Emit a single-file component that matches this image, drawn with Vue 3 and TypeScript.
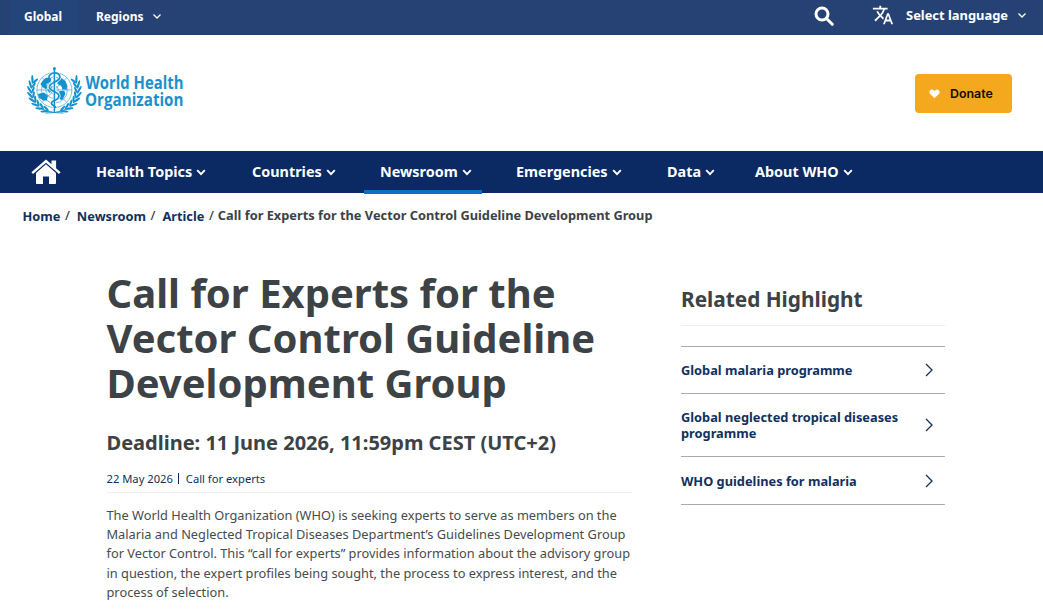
<script setup lang="ts">
import { ref } from 'vue'

interface NavItem {
  label: string
  active?: boolean
}

interface Leaf {
  x: number
  y: number
  rot: number
  len: number
}

const navItems: NavItem[] = [
  { label: 'Health Topics' },
  { label: 'Countries' },
  { label: 'Newsroom', active: true },
  { label: 'Emergencies' },
  { label: 'Data' },
  { label: 'About WHO' },
]

const crumbs = ['Home', 'Newsroom', 'Article']
const highlights = ref(['Global malaria programme', 'Global neglected tropical diseases programme', 'WHO guidelines for malaria'])

// laurel leaves of the left branch, mirrored for the right one
const leaves: Leaf[] = []
for (let i = 0; i < 8; i++) {
  const deg = 113 + i * 13.5
  const a = (deg * Math.PI) / 180
  for (const [r, tilt] of [[24.8, 60], [21.4, 112]]) {
    leaves.push({ x: 28 + r * Math.cos(a), y: 24 + r * Math.sin(a) * 0.93, rot: deg + tilt, len: r > 22 ? 4.4 : 3.3 })
  }
}
</script>

<template>
  <div class="page">
    <div class="topbar">
      <a class="top-global">Global</a>
      <a class="top-regions">Regions
        <svg class="chev-sm" viewBox="0 0 10 7"><path d="M1.5 1.5 5 5l3.5-3.5" /></svg>
      </a>
      <div class="top-right">
        <svg class="search" viewBox="0 0 20 20"><circle cx="8" cy="8" r="6" /><path d="m12.5 12.5 5.8 5.8" /></svg>
        <svg class="translate" viewBox="0 0 24 24">
          <path d="M12.87 15.07l-2.54-2.51.03-.03c1.74-1.94 2.98-4.17 3.71-6.53H17V4h-7V2H8v2H1v1.99h11.17C11.5 7.92 10.44 9.75 9 11.35 8.07 10.32 7.3 9.19 6.69 8h-2c.73 1.63 1.73 3.17 2.98 4.56l-5.09 5.02L4 19l5-5 3.11 3.11.76-2.04zM18.5 10h-2L12 22h2l1.12-3h4.75L21 22h2l-4.5-12zm-2.62 7l1.62-4.33L19.12 17h-3.24z" />
        </svg>
        <span class="lang">Select language</span>
        <svg class="chev-sm" viewBox="0 0 10 7"><path d="M1.5 1.5 5 5l3.5-3.5" /></svg>
      </div>
    </div>

    <header class="header">
      <svg class="logo" viewBox="0 0 160 52">
        <g transform="translate(-.6 0)">
          <g class="globe">
            <circle cx="28" cy="24" r="17.5" />
            <circle cx="28" cy="24" r="13" />
            <circle cx="28" cy="24" r="8.5" />
            <circle cx="28" cy="24" r="4" />
            <path d="M10.5 24h35M28 6.5v35M15.6 11.6l24.8 24.8M40.4 11.6 15.6 36.4" />
          </g>
          <g class="land">
            <path d="m16 15 3-3 4-1 2 2-1 3-4 2 1 4-2 1-3-2-2-3z" />
            <path d="m31 12 4 0 4 3 2 5-1 4-4-1-1-3-4-2 1-4z" />
            <path d="m11.5 28 6-1.5 4 3-1 5-4 0-4-3z" />
            <path d="m33 25 5 0 1 3-3 6-4-1z" />
            <path d="m22 20 3 0 1 4-3 3-2-3z" />
          </g>
          <g class="laurel">
            <ellipse v-for="(l, i) in leaves" :key="i" :cx="l.x" :cy="l.y" :rx="l.len" ry="1.1" :transform="`rotate(${l.rot} ${l.x} ${l.y})`" />
            <path class="stem" d="M37 47Q23 47 14 42" />
          </g>
          <g class="laurel" transform="translate(56 0) scale(-1 1)">
            <ellipse v-for="(l, i) in leaves" :key="i" :cx="l.x" :cy="l.y" :rx="l.len" ry="1.1" :transform="`rotate(${l.rot} ${l.x} ${l.y})`" />
            <path class="stem" d="M37 47Q23 47 14 42" />
          </g>
          <path class="halo" d="M28 4v42" />
          <path class="halo" d="M22.5 12c0-7 11-6.5 11-1 0 5-10.5 5-10.5 10s9.5 4 9.500 9-7.500 4-7.500 7 4.500 3 4.500 5" />
          <path class="snake" d="M22.5 12c0-7 11-6.5 11-1 0 5-10.5 5-10.5 10s9.5 4 9.500 9-7.500 4-7.500 7 4.500 3 4.500 5" />
          <path class="staff" d="M28 3v44" />
          <circle class="knob" cx="28" cy="2.6" r="1.5" />
        </g>
        <text class="logo-text" x="58.5" y="23" textLength="98" lengthAdjust="spacingAndGlyphs">World Health</text>
        <text class="logo-text" x="58" y="40" textLength="98.5" lengthAdjust="spacingAndGlyphs">Organization</text>
      </svg>
      <button class="donate">
        <svg viewBox="0 0 12 11"><path d="M6 10.3 1.2 5.6C-.9 3.2 1.6-.6 4.6 1L6 2.2 7.4 1c3-1.6 5.5 2.2 3.4 4.6z" /></svg>
        <span>Donate</span>
      </button>
    </header>

    <nav class="nav">
      <svg class="home" viewBox="0 0 30 26">
        <path d="M5 14 15 5.2 25 14v10.2q0 .8-.8.8H18v-7.5h-6V25H5.8q-.8 0-.8-.8z" />
        <path d="M15 .6 20.5 5.3V1.4h4.6v7.8l4.5 4-1.6 1.9L15 3.8 2 15.1.4 13.2z" />
      </svg>
      <div class="nav-items">
        <a v-for="item in navItems" :key="item.label" class="nav-item" :class="{ active: item.active }">
          <span>{{ item.label }}</span>
          <svg class="chev" viewBox="0 0 10 7"><path d="m1.2 1.2 3.8 4 3.8-4" /></svg>
        </a>
      </div>
    </nav>

    <div class="crumbs">
      <template v-for="c in crumbs" :key="c">
        <a>{{ c }}</a><i>/</i>
      </template>
      <span>Call for Experts for the Vector Control Guideline Development Group</span>
    </div>

    <main class="content">
      <article class="article">
        <h1>Call for Experts for the<br />Vector Control Guideline<br />Development Group</h1>
        <h2>Deadline: 11 June 2026, 11:59pm CEST (UTC+2)</h2>
        <div class="meta"><span>22 May 2026</span><b></b><span>Call for experts</span></div>
        <p>
          The World Health Organization (WHO) is seeking experts to serve as members on the<br />
          Malaria and Neglected Tropical Diseases Department’s Guidelines Development Group<br />
          for Vector Control. This “call for experts” provides information about the advisory group<br />
          in question, the expert profiles being sought, the process to express interest, and the<br />
          process of selection.
        </p>
      </article>

      <aside class="side">
        <h3>Related Highlight</h3>
        <ul>
          <li v-for="h in highlights" :key="h">
            <a>{{ h }}</a>
            <svg viewBox="0 0 8 14"><path d="m1 1 6 6-6 6" /></svg>
          </li>
        </ul>
      </aside>
    </main>
  </div>
</template>

<style>
body { background: #fff; overflow: hidden; }
</style>

<style scoped>
.page {
  width: 1043px; height: 612px; overflow: hidden; background: #fff; color: #3c4245;
  font-family: "Noto Sans", sans-serif; box-sizing: border-box;
}
.page * { box-sizing: border-box; }
svg { display: block; flex: none; }

.topbar { display: flex; height: 35px; background: #264274; color: #fff; font-size: 12px; font-weight: 700; line-height: 33px; }
.top-global { width: 68px; margin-left: 10px; padding-left: 14px; background: #23457a; }
.top-regions { display: flex; align-items: center; gap: 8px; margin-left: 18px; height: 33px; }
.chev-sm { width: 10px; height: 7px; fill: none; stroke: #fff; stroke-width: 1.3; }
.top-right { display: flex; align-items: center; height: 31px; margin-left: auto; padding-right: 16px; font-size: 12.9px; }
.search { width: 20px; height: 20px; margin-right: 38px; fill: none; stroke: #fff; stroke-width: 3; stroke-linecap: round; }
.translate { width: 22px; height: 22px; margin: -2px 12px 0 0; fill: #fff; }
.lang { margin-right: 9px; }

.header { display: flex; justify-content: space-between; height: 116px; padding: 31px 31px 0 27px; }
.logo { width: 160px; height: 52px; overflow: visible; }
.globe { fill: none; stroke: #3ba5d8; stroke-width: 0.7; }
.land, .laurel { fill: #1492cf; }
.stem { fill: none; stroke: #1492cf; stroke-width: 1; }
.halo { fill: none; stroke: #fff; stroke-width: 3.2; }
.snake { fill: none; stroke: #1492cf; stroke-width: 1.8; }
.staff { stroke: #1492cf; stroke-width: 1.6; }
.knob { fill: #1492cf; }
.logo-text { fill: #1b90cb; font: 700 18.5px "Open Sans", sans-serif; }
.donate {
  display: flex; align-items: center; gap: 10px; width: 97px; height: 39px; margin-top: 8px; padding: 0 0 0 14px;
  border: 0; border-radius: 4px; background: #f4a81d; color: #1a0a04; font: 600 12.4px Inter, sans-serif;
}
.donate svg { width: 11px; height: 10px; fill: #fff; }

.nav { display: flex; height: 42px; background: #0b2a63; color: #fff; }
.home { width: 30px; height: 26px; margin: 8px 19px 0 31px; fill: #fff; }
.nav-items { display: grid; grid-template-columns: 156px 128px 136px 151px 88px 130px; justify-items: start; }
.nav-item { display: flex; align-items: center; gap: 4px; height: 43px; padding: 2px 10px 0 16px; font-size: 14.4px; font-weight: 700; border-bottom: 4px solid transparent; }
.nav-item.active { border-bottom-color: #0d70c8; }
.chev { width: 10px; height: 7px; margin-top: 2px; fill: none; stroke: #fff; stroke-width: 1.9; }

.crumbs { display: flex; height: 45px; padding: 12px 0 0 22.5px; font-size: 12.8px; font-weight: 700; line-height: 20px; white-space: nowrap; }
.crumbs a { padding-top: 1px; color: #12305e; }
.crumbs i { margin: 0 7px 0 4.5px; font-style: normal; font-weight: 500; }
.crumbs i:last-of-type { margin-right: 4px; }

.content { display: flex; padding-left: 106.5px; }
.article { width: 525px; margin-right: 49.5px; white-space: nowrap; }
h1 { margin: 32px 0 0; font-size: 40px; line-height: 45px; font-weight: 700; }
h2 { margin: 24px 0 0; font-size: 20px; line-height: 28px; font-weight: 700; }
.meta { display: flex; align-items: center; height: 36px; padding-top: 7px; border-bottom: 1px solid #eee; font-size: 11.2px; color: #12305e; }
.meta b { width: 1px; height: 11px; margin: 0 7px 0 5px; background: #12305e; }
.article p { margin: 13px 0 0; font-size: 12.8px; line-height: 19.2px; color: #464b4e; }

.side { width: 264px; }
h3 { height: 50px; margin: 38px 0 0; padding-top: 8px; border-bottom: 1px solid #eee; font-size: 20.8px; line-height: 30px; font-weight: 700; }
ul { margin: 20px 0 0; padding: 0; list-style: none; border-top: 1px solid #aaa; }
li { display: flex; align-items: center; justify-content: space-between; padding: 15px 12px 15px 0; border-bottom: 1px solid #aaa; color: #12305e; font-size: 12.8px; line-height: 16px; font-weight: 700; }
li:last-child { padding: 16px 12px 15px 0; }
li a { width: 232px; }
li svg { width: 8px; height: 14px; fill: none; stroke: #12305e; stroke-width: 1.3; }
</style>
